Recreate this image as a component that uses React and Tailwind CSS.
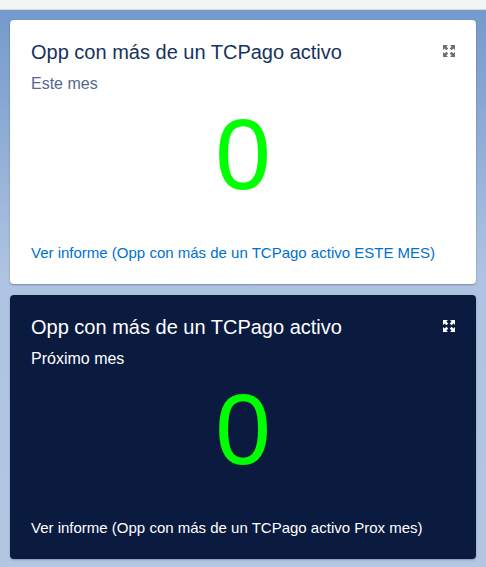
import React from "react";

function ExpandIcon({ color }) {
  return (
    <svg width="14" height="14" viewBox="0 0 14 14" fill={color}>
      <path d="M1 1h5L4.4 2.6 6.2 4.4 4.4 6.2 2.6 4.4 1 6z" />
      <path d="M13 1v5l-1.6-1.6-1.8 1.8-1.8-1.8 1.8-1.8L8 1z" />
      <path d="M1 13V8l1.6 1.6 1.8-1.8 1.8 1.8-1.8 1.8L6 13z" />
      <path d="M13 13H8l1.6-1.6-1.8-1.8 1.8-1.8 1.8 1.8L13 8z" />
    </svg>
  );
}

function Card({ dark, subtitle, link }) {
  return (
    <div
      className={
        "relative mx-[10px] h-[264px] rounded-[4px] flex flex-col px-[21px] " +
        (dark
          ? "bg-[#0b1a3f] shadow-[0_1px_2px_rgba(0,0,0,0.25)]"
          : "bg-white shadow-[0_1px_2px_rgba(0,0,0,0.3)]")
      }
    >
      <div className="absolute right-[20px] top-[24px]">
        <ExpandIcon color={dark ? "#ffffff" : "#706e6b"} />
      </div>
      <div
        className={
          "mt-[20px] text-[20px] leading-[24px] " +
          (dark ? "text-white" : "text-[#16325c]")
        }
      >
        Opp con más de un TCPago activo
      </div>
      <div
        className={
          "mt-[10px] text-[16px] leading-[20px] " +
          (dark ? "text-white" : "text-[#54698d]")
        }
      >
        {subtitle}
      </div>
      <div className="flex justify-center mt-[10px]">
        <span className="text-[100px] leading-[100px] text-[#00ff00]">0</span>
      </div>
      <div
        className={
          "mt-auto mb-[22px] text-[15px] leading-[18px] " +
          (dark ? "text-white" : "text-[#0070d2]")
        }
      >
        {link}
      </div>
    </div>
  );
}

export default function App() {
  return (
    <div
      className="w-[486px] h-[567px] overflow-hidden"
      style={{ fontFamily: '"Liberation Sans", Arial, sans-serif' }}
    >
      <div className="h-[10px] bg-[#f3f3f3] border-b border-[#d8d8d8]" />
      <div className="h-[557px] bg-[linear-gradient(to_bottom,#759acb_0px,#8eacd5_120px,#aec3e1_260px,#b3c7e3_557px)] pt-[10px] flex flex-col gap-[11px]">
        <Card
          subtitle="Este mes"
          link="Ver informe (Opp con más de un TCPago activo ESTE MES)"
        />
        <Card
          dark
          subtitle="Próximo mes"
          link="Ver informe (Opp con más de un TCPago activo Prox mes)"
        />
      </div>
    </div>
  );
}
